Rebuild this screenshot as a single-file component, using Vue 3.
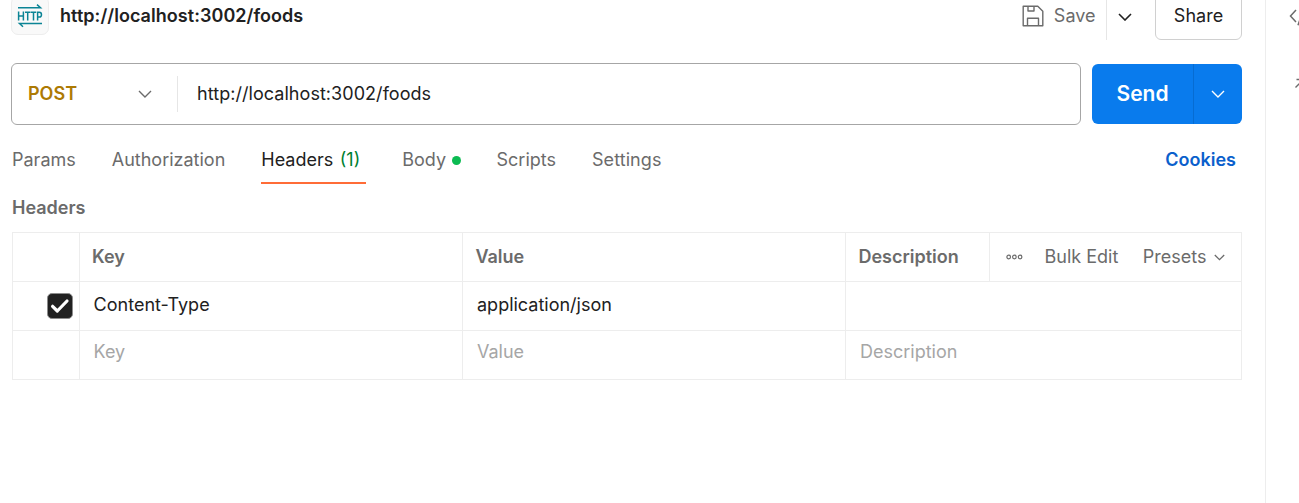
<script setup>
const tabs = [
  { id: 'params', label: 'Params' },
  { id: 'auth', label: 'Authorization' },
  { id: 'headers', label: 'Headers', count: 1, active: true },
  { id: 'body', label: 'Body', dot: true },
  { id: 'scripts', label: 'Scripts' },
  { id: 'settings', label: 'Settings' },
]
</script>

<template>
  <div class="app">
    <main class="main">
      <header class="top">
        <div class="badge">
          <svg width="26" height="26" viewBox="0 0 26 26" fill="none">
            <path d="M1 3.7H23.5L20 .6" stroke="#0b8495" stroke-width="1.5" />
            <path d="M25 19.5H2.5L6 22.8" stroke="#0b8495" stroke-width="1.5" />
            <path d="M1.6 7.6V16.6M6.4 7.6V16.6M1.6 12H6.4M8 8.3H13.4M10.7 8.3V16.6M13.8 8.3H19.2M16.5 8.3V16.6M20.6 16.6V8.3H22.3C25.2 8.3 25.2 13 22.3 13H20.6" stroke="#0b8495" stroke-width="1.5" />
          </svg>
        </div>
        <h1 class="title">http://localhost:3002/foods</h1>
        <div class="save">
          <svg width="22" height="22" viewBox="0 0 22 22" fill="none" stroke="#6b6b6b" stroke-width="1.4" stroke-linejoin="round">
            <path d="M1.2 1.2H15.8L20.8 6.2V20.8H1.2ZM6 1.2V6H12V1.2M5.5 20.8V13.2H16.5V20.8" />
          </svg>
          <span>Save</span>
        </div>
        <div class="save-more">
          <svg width="14" height="8" viewBox="0 0 14 8" fill="none" stroke="#212121" stroke-width="1.6"><path d="M1 1L7 7L13 1" /></svg>
        </div>
        <button class="share">Share</button>
      </header>

      <section class="request">
        <div class="url-box">
          <div class="method">
            <span>POST</span>
            <svg width="14" height="8" viewBox="0 0 14 8" fill="none" stroke="#6b6b6b" stroke-width="1.4"><path d="M1 1L7 7L13 1" /></svg>
          </div>
          <div class="url">http://localhost:3002/foods</div>
        </div>
        <div class="send">
          <div class="send-label">Send</div>
          <div class="send-more">
            <svg width="14" height="8" viewBox="0 0 14 8" fill="none" stroke="#fff" stroke-width="1.4"><path d="M1 1L7 7L13 1" /></svg>
          </div>
        </div>
      </section>

      <nav class="tabs">
        <div v-for="t in tabs" :key="t.id" class="tab" :class="[t.id, { active: t.active }]">
          <span class="tab-label">{{ t.label }}</span>
          <span v-if="t.count" class="count">({{ t.count }})</span>
          <i v-if="t.dot" class="dot"></i>
        </div>
        <a class="cookies">Cookies</a>
      </nav>

      <h2 class="section-title">Headers</h2>

      <div class="grid">
        <div class="row head">
          <div class="cell check"></div>
          <div class="cell key">Key</div>
          <div class="cell value">Value</div>
          <div class="cell desc">Description</div>
          <div class="cell actions">
            <svg width="17" height="6" viewBox="0 0 17 6" fill="none" stroke="#6b6b6b" stroke-width="1.2">
              <circle cx="2.7" cy="3" r="1.8" /><circle cx="8.4" cy="3" r="1.8" /><circle cx="14.1" cy="3" r="1.8" />
            </svg>
            <span class="bulk">Bulk Edit</span>
            <span class="presets">Presets</span>
            <svg class="presets-chev" width="11" height="7" viewBox="0 0 11 7" fill="none" stroke="#6b6b6b" stroke-width="1.3"><path d="M.8 1L5.5 5.7L10.2 1" /></svg>
          </div>
        </div>
        <div class="row item">
          <div class="cell check">
            <div class="box">
              <svg width="20" height="16" viewBox="0 0 20 16" fill="none" stroke="#fff" stroke-width="3.2" stroke-linecap="round" stroke-linejoin="round"><path d="M2.6 8.3L7.3 13L17 3" /></svg>
            </div>
          </div>
          <div class="cell key">Content-Type</div>
          <div class="cell value">application/json</div>
          <div class="cell wide"></div>
        </div>
        <div class="row blank">
          <div class="cell check"></div>
          <div class="cell key">Key</div>
          <div class="cell value">Value</div>
          <div class="cell wide">Description</div>
        </div>
      </div>
    </main>
    <aside class="side">
      <svg class="code-icon" width="26" height="18" viewBox="0 0 26 18" fill="none" stroke="#6b6b6b" stroke-width="1.5">
        <path d="M7 2L1.5 8L7 14M9 17.2L14.5 1M17 2L22.5 8L17 14" />
      </svg>
      <svg class="expand-icon" width="16" height="16" viewBox="0 0 16 16" fill="none" stroke="#6b6b6b" stroke-width="1.4">
        <path d="M.5 9.5L8 2M1.5 1.5H8.5V8.5" />
      </svg>
    </aside>
  </div>
</template>

<style>
html, body { overflow: hidden; background: #fff; }
</style>

<style scoped>
* { box-sizing: border-box; }
.app {
  display: flex;
  width: 1299px;
  height: 503px;
  overflow: hidden;
  background: #fff;
  color: #212121;
  font: 400 18px/24px Inter, "Liberation Sans", sans-serif;
  white-space: nowrap;
}
svg { display: block; flex: none; }
.main { width: 1265px; flex: none; padding-left: 11px; }
.side { flex: 1; border-left: 1px solid #ededed; overflow: hidden; }
.code-icon { margin: 8px 0 0 23px; }
.expand-icon { margin: 52px 0 0 29px; }

.top { display: flex; height: 40px; padding-right: 23px; }
.badge {
  width: 38px; height: 39px; margin-top: -4px; padding: 7px 5px;
  border: 1px solid #ededed; border-radius: 7px; background: #f9f9f9;
}
.title { margin: 4px 0 0 11px; font-size: 18px; font-weight: 600; line-height: 24px; letter-spacing: 0.05px; }
.save { display: flex; gap: 10px; margin: 4px 10.5px 0 auto; color: #6b6b6b; }
.save svg { margin-top: 1px; }
.save-more { width: 49px; padding: 13px 0 0 11px; border-left: 1px solid #e6e6e6; }
.share {
  width: 87px; height: 50px; margin-top: -10px; padding: 1px 0 0;
  border: 1px solid #d0d0d0; border-radius: 6px; background: #fff;
  color: inherit; font: inherit;
}

.request { display: flex; gap: 11px; margin-top: 23px; }
.url-box {
  display: flex; align-items: center; width: 1070px; height: 62px;
  border: 1px solid #a6a6a6; border-radius: 6px;
}
.method {
  display: flex; align-items: center; justify-content: space-between;
  width: 166px; height: 36px; padding: 0 25px 0 16px;
  border-right: 1px solid #e6e6e6; color: #ad7a03; font-weight: 600;
}
.url { padding-left: 19px; letter-spacing: 0.05px; }
.send {
  display: flex; width: 150px; height: 60px; margin-top: 1px;
  border-radius: 6px; background: #097bed; color: #fff;
}
.send-label { width: 101px; text-align: center; font-size: 21px; font-weight: 600; line-height: 60px; }
.send-more { flex: 1; padding: 26px 0 0 17px; border-left: 1px solid #066cd2; }

.tabs { display: flex; gap: 36px; height: 59px; padding: 0 29px 0 1px; color: #6b6b6b; }
.tab { display: flex; align-items: center; height: 59px; padding-top: 11px; }
.tab.active { color: #212121; border-bottom: 2px solid #ff6c37; padding-top: 13px; padding-right: 6px; }
.count { margin-left: 6.5px; color: #007f31; }
.dot { width: 9px; height: 9px; margin-left: 5.5px; border-radius: 50%; background: #0cbb52; }
.settings { letter-spacing: 0.08px; }
.cookies { margin: 23px 0 0 auto; color: #0b5fcc; font-weight: 600; }
.section-title { margin: 12px 0 12px 1px; color: #6b6b6b; font-size: 18px; font-weight: 600; line-height: 24px; }

.grid { width: 1230px; margin-left: 1px; border: 1px solid #ededed; border-width: 1px 0 0 1px; }
.row { display: flex; height: 49px; border-bottom: 1px solid #ededed; }
.cell { border-right: 1px solid #ededed; line-height: 48px; }
.check { width: 67px; }
.key, .value { width: 383px; padding-left: 13.6px; }
.value { padding-left: 14px; }
.head .key { padding-left: 12px; font-weight: 600; }
.head .value, .head .desc { padding-left: 12.4px; font-weight: 600; }
.head { color: #6b6b6b; }
.desc { width: 144px; }
.actions { display: flex; align-items: center; width: 252px; padding-left: 15.5px; }
.bulk { margin-left: 22px; }
.presets { margin-left: 24.5px; }
.presets-chev { margin-left: 7px; }
.item .cell { line-height: 46px; }
.wide { width: 396px; padding-left: 14px; }
.blank { color: #a6a6a6; }
.blank .cell { line-height: 42px; }
.box {
  display: flex; align-items: center; justify-content: center;
  width: 26px; height: 26px; margin: 11px 0 0 34px;
  border: 1px solid #8c8c8c; border-radius: 5px; background: #212121;
}
</style>
